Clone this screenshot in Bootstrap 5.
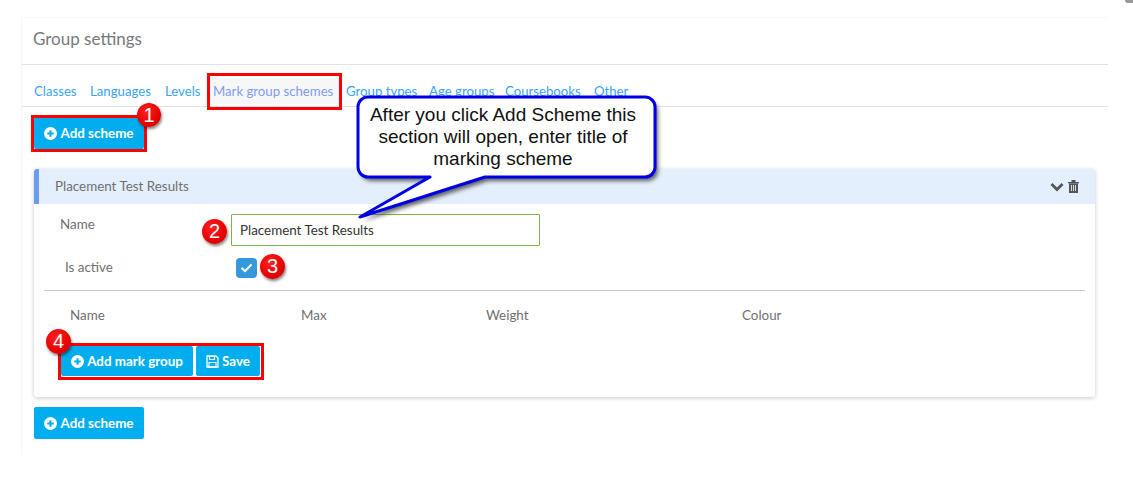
<!DOCTYPE html>
<html lang="en">
<head>
  <meta charset="UTF-8" />
  <title>Group settings</title>
  <meta name="viewport" content="width=device-width, initial-scale=1" />
  <link href="https://cdn.jsdelivr.net/npm/bootstrap@5.3.3/dist/css/bootstrap.min.css" rel="stylesheet" />
  <style>
    body { background:#fff; font-family:"Lato",sans-serif; font-size:13.4px; color:#6f6f6f; position:relative; height:478px; overflow:hidden; }
    .panel-wrap { width:1087px; height:438px; margin:17px 0 0 21px; border-left:1px solid #f6f6f6; border-top:1px solid #f8f8f8; }
    .panel-head { height:47px; padding:8px 0 0 11px; border-bottom:1px solid #e2e2e2; font-size:17px; line-height:26px; color:#77797c; }
    .tab-bar { height:42px; padding:13px 0 0 12px; border-bottom:1px solid #e2e2e2; flex-wrap:nowrap; }
    .tab-bar .nav-item { flex:none; }
    .tab-bar .nav-link { padding:0; font-size:13.2px; line-height:26px; color:#3ba4f2; white-space:nowrap; display:block; }
    .tab-bar .nav-link.act { color:#7f9cf5; background:#f7f7f7; margin:0 6px 0 -3px; padding-left:3px; }
    .t1 { width:56px; } .t2 { width:75px; } .t3 { width:48px; } .t4 { width:133px; } .t5 { width:83px; } .t6 { width:76px; } .t7 { width:89px; }
    .btn-sky { background:#00aeef; color:#fff; border:0; border-radius:2px; font-size:13.4px; font-weight:700; height:30px; padding:0; display:inline-flex; align-items:center; justify-content:center; gap:3px; white-space:nowrap; }
    .btn-sky svg { flex:none; }
    .top-add { margin:10px 0 20px 12px; width:110px; height:32px; }
    .bottom-add { margin:10px 0 0 12px; width:110px; height:32px; }
    .scheme-card { margin-left:12px; width:1061px; height:228px; border:0; border-radius:3px; box-shadow:0 1px 4px rgba(0,0,0,.22); }
    .scheme-head { height:35px; background:#e3effc; border-left:5px solid #6a9cf0; border-radius:3px 3px 0 0; padding:0 16px 0 16px; color:#6f6f6f; }
    .scheme-body { padding:10px 10px 0 10px; }
    .lbl { width:187px; padding-left:16px; }
    .lbl-in { padding-left:21px; margin-top:-2px; }
    .name-input { width:309px; height:32px; border:1px solid #7cb342; border-radius:1px; padding:0 8px; font-size:13.4px; color:#333; }
    .name-input:focus { outline:0; }
    .active-row { margin-top:12px; }
    .check-box { width:21px; height:20px; background:#3498db; border-radius:4px; margin-left:5px; }
    .divide { margin:12px 0 0 0; border-top:1px solid #c8c8c8; width:1041px; }
    .col-heads { height:55px; padding-top:14px; }
    .col-heads span { display:block; }
    .ch-1 { width:257px; padding-left:26px; }
    .ch-2 { width:185px; }
    .ch-3 { width:256px; }
    .btn-pair { margin-left:17px; gap:3px; }
    .btn-mark { width:132px; }
    .btn-save { width:64px; }
    .note { position:absolute; border:3px solid #f00; }
    .note-tab { left:207px; top:73px; width:135px; height:37px; }
    .note-top { left:31px; top:115px; width:116px; height:37px; }
    .note-pair { left:58px; top:343px; width:206px; height:37px; }
    .dot { position:absolute; width:25px; height:25px; border-radius:50%; background:radial-gradient(circle at 40% 35%, #f22 0%, #e60000 60%, #b00 100%); color:#fff; font-family:"Liberation Sans",sans-serif; font-size:20px; line-height:25px; text-align:center; box-shadow:1px 2px 3px rgba(0,0,0,.5); }
    .dot-1 { left:137px; top:103px; width:24px; height:24px; line-height:24px; }
    .dot-2 { left:202px; top:219px; }
    .dot-3 { left:260px; top:254px; }
    .dot-4 { left:46px; top:329px; }
    .bubble-art { position:absolute; left:350px; top:90px; }
    .bubble-text { position:absolute; left:355px; top:104px; width:296px; font-family:"Liberation Sans",sans-serif; font-size:19px; line-height:22px; color:#111; text-align:center; }
    .corner-speck { position:absolute; right:0; top:0; width:8px; height:3px; background:#999; border-radius:0 0 0 6px; }
  </style>
</head>
<body>

  <div class="panel-wrap">
    <div class="panel-head">Group settings</div>
    <ul class="nav tab-bar">
      <li class="nav-item t1"><a class="nav-link" href="#">Classes</a></li>
      <li class="nav-item t2"><a class="nav-link" href="#">Languages</a></li>
      <li class="nav-item t3"><a class="nav-link" href="#">Levels</a></li>
      <li class="nav-item t4"><a class="nav-link act" href="#">Mark group schemes</a></li>
      <li class="nav-item t5"><a class="nav-link" href="#">Group types</a></li>
      <li class="nav-item t6"><a class="nav-link" href="#">Age groups</a></li>
      <li class="nav-item t7"><a class="nav-link" href="#">Coursebooks</a></li>
      <li class="nav-item"><a class="nav-link" href="#">Other</a></li>
    </ul>

    <button class="btn-sky top-add">
      <svg width="13" height="13" viewBox="0 0 14 14"><circle cx="7" cy="7" r="7" fill="#fff"/><path d="M7 3.500v7M3.500 7h7" stroke="#00aeef" stroke-width="2.200"/></svg>
      Add scheme
    </button>

    <div class="card scheme-card">
      <div class="scheme-head d-flex align-items-center justify-content-between">
        <span>Placement Test Results</span>
        <span class="d-flex align-items-center gap-1">
          <svg width="14" height="10" viewBox="0 0 14 10"><path d="M1.500 2 7 7.500 12.500 2" fill="none" stroke="#555" stroke-width="2.800"/></svg>
          <svg width="11" height="13" viewBox="0 0 11 13"><path d="M0 2h11v1.200H0zM3.500 0h4v2h-4zM1 3.500h9V13H1z" fill="#555"/><path d="M3.500 5v6M5.500 5v6M7.500 5v6" stroke="#e3effc" stroke-width=".9"/></svg>
        </span>
      </div>
      <div class="scheme-body">
        <div class="d-flex align-items-start">
          <label class="lbl">Name</label>
          <input class="name-input" value="Placement Test Results" />
        </div>
        <div class="d-flex align-items-center active-row">
          <label class="lbl lbl-in">Is active</label>
          <div class="check-box d-flex align-items-center justify-content-center">
            <svg width="13" height="10" viewBox="0 0 13 10"><path d="M1.500 5 5 8l6.500-6.500" fill="none" stroke="#fff" stroke-width="2.200"/></svg>
          </div>
        </div>
        <div class="divide"></div>
        <div class="d-flex col-heads">
          <span class="ch-1">Name</span>
          <span class="ch-2">Max</span>
          <span class="ch-3">Weight</span>
          <span>Colour</span>
        </div>
        <div class="d-flex btn-pair">
          <button class="btn-sky btn-mark">
            <svg width="13" height="13" viewBox="0 0 14 14"><circle cx="7" cy="7" r="7" fill="#fff"/><path d="M7 3.500v7M3.500 7h7" stroke="#00aeef" stroke-width="2.200"/></svg>
            Add mark group
          </button>
          <button class="btn-sky btn-save">
            <svg width="13" height="13" viewBox="0 0 13 13"><path d="M1 1h9l2 2v9H1z" fill="none" stroke="#fff" stroke-width="1.300"/><path d="M3.500 1.500h5v3h-5zM3 7.500h7V12H3z" fill="none" stroke="#fff" stroke-width="1.100"/></svg>
            Save
          </button>
        </div>
      </div>
    </div>

    <button class="btn-sky bottom-add">
      <svg width="13" height="13" viewBox="0 0 14 14"><circle cx="7" cy="7" r="7" fill="#fff"/><path d="M7 3.500v7M3.500 7h7" stroke="#00aeef" stroke-width="2.200"/></svg>
      Add scheme
    </button>
  </div>

  <!-- annotations drawn on top of the screenshot -->
  <div class="note note-tab"></div>
  <div class="note note-top"></div>
  <div class="note note-pair"></div>
  <div class="dot dot-1">1</div>
  <div class="dot dot-2">2</div>
  <div class="dot dot-3">3</div>
  <div class="dot dot-4">4</div>

  <svg class="bubble-art" width="320" height="135" viewBox="350 90 320 135">
    <defs><filter id="sh" x="-10%" y="-10%" width="120%" height="130%"><feGaussianBlur stdDeviation="2"/></filter></defs>
    <path d="M368 97H645a10 10 0 0 1 10 10V167a10 10 0 0 1 -10 10H485L360 217 430 177H368a10 10 0 0 1 -10 -10V107a10 10 0 0 1 10 -10Z" fill="#444" opacity=".85" filter="url(#sh)" transform="translate(3 4)"/>
    <path d="M368 97H645a10 10 0 0 1 10 10V167a10 10 0 0 1 -10 10H485L360 217 430 177H368a10 10 0 0 1 -10 -10V107a10 10 0 0 1 10 -10Z" fill="#fff" stroke="#0000e6" stroke-width="3" stroke-linejoin="round"/>
  </svg>
  <div class="bubble-text">After you click Add Scheme this section will open, enter title of marking scheme</div>
  <div class="corner-speck"></div>

  <script src="https://cdn.jsdelivr.net/npm/bootstrap@5.3.3/dist/js/bootstrap.bundle.min.js"></script>
</body>
</html>
